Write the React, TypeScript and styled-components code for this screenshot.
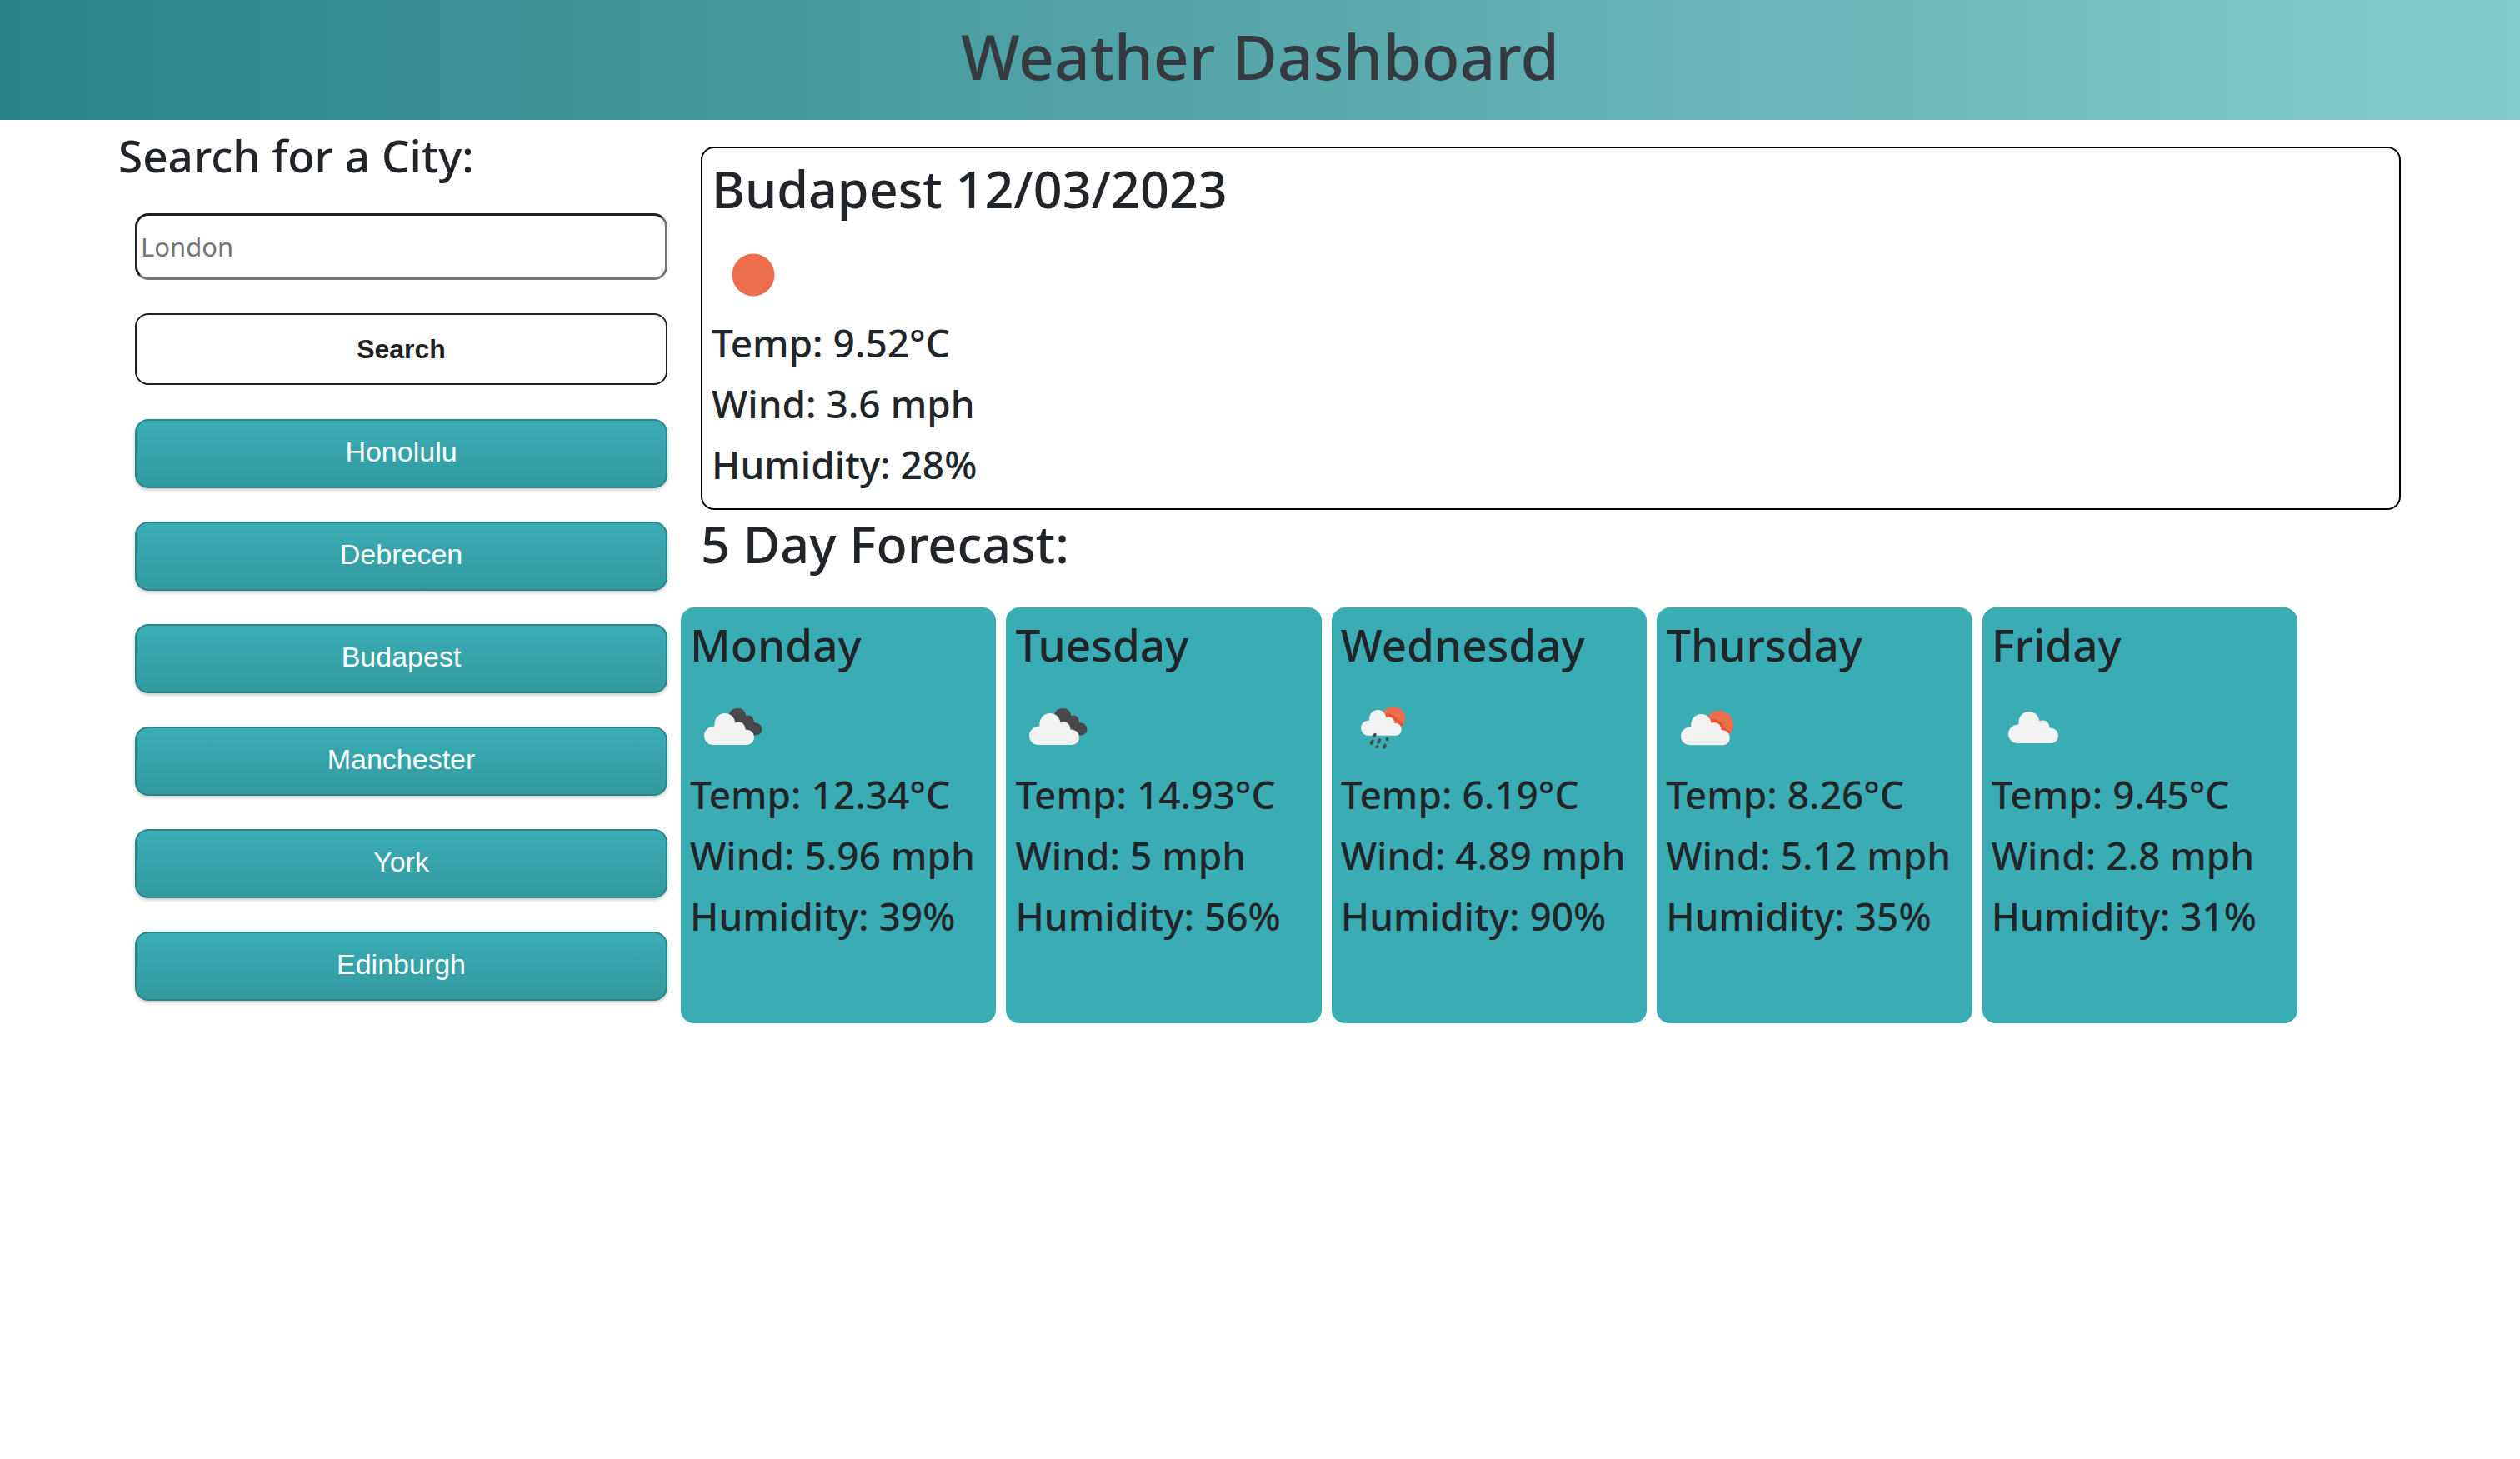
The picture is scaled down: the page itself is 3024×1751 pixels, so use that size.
import React, { useState } from "react";
import styled, { createGlobalStyle } from "styled-components";

type Sky = "clear" | "broken" | "rain" | "few" | "cloud";

interface Reading {
  temp: string;
  wind: string;
  humidity: string;
  sky: Sky;
}

const cities = ["Honolulu", "Debrecen", "Budapest", "Manchester", "York", "Edinburgh"];

const today: Reading = { temp: "9.52", wind: "3.6", humidity: "28", sky: "clear" };

const forecast: (Reading & { day: string })[] = [
  { day: "Monday", temp: "12.34", wind: "5.96", humidity: "39", sky: "broken" },
  { day: "Tuesday", temp: "14.93", wind: "5", humidity: "56", sky: "broken" },
  { day: "Wednesday", temp: "6.19", wind: "4.89", humidity: "90", sky: "rain" },
  { day: "Thursday", temp: "8.26", wind: "5.12", humidity: "35", sky: "few" },
  { day: "Friday", temp: "9.45", wind: "2.8", humidity: "31", sky: "cloud" },
];

const GlobalStyle = createGlobalStyle`
  *, *::before, *::after { box-sizing: border-box; }
  body {
    margin: 0;
    background: #fff;
    color: #212529;
    font-family: "Noto Sans", sans-serif;
  }
  h1, h2, h3, p { margin: 0; font-weight: 500; }
`;

const Header = styled.header`
  padding: 19px 0 29px;
  text-align: center;
  background: linear-gradient(90deg, #2a8387, #83cccf);
`;

const Title = styled.h1`
  font-size: 75px;
  line-height: 96px;
  color: #343a40;
`;

const Page = styled.div`
  display: grid;
  grid-template-columns: minmax(0, 659fr) minmax(0, 2040fr);
  column-gap: 40px;
  padding: 0 143px 0 142px;
`;

const Sidebar = styled.aside`
  padding-top: 9px;
`;

const SearchForm = styled.form`
  display: flex;
  flex-direction: column;
`;

const SearchLabel = styled.label`
  font-size: 53px;
  line-height: 68px;
  font-weight: 500;
`;

const SearchInput = styled.input`
  height: 80px;
  margin: 35px 0 40px 20px;
  padding: 0 4px;
  border: 3px solid;
  border-color: #212121 #767676 #767676 #212121;
  border-radius: 16px;
  background: #fff;
  color: #212529;
  font-family: inherit;
  font-size: 31px;

  &::placeholder { color: #757575; opacity: 1; }
`;

const SearchButton = styled.button`
  height: 86px;
  margin-left: 20px;
  border: 2px solid #212121;
  border-radius: 16px;
  background: #fff;
  color: #212121;
  font: bold 32px Arial, "Liberation Sans", sans-serif;
  cursor: pointer;
`;

const CityList = styled.div`
  display: flex;
  flex-direction: column;
  gap: 40px;
  margin: 41px 0 0 20px;
`;

const CityButton = styled.button`
  height: 83px;
  padding: 0 0 5px;
  border: 2px solid #2b8488;
  border-radius: 16px;
  background: linear-gradient(#3aadb4, #329a9e);
  background-origin: border-box;
  box-shadow: 0 2px 4px rgba(0, 0, 0, 0.22);
  color: #fff;
  font: 34px Arial, "Liberation Sans", sans-serif;
  cursor: pointer;
`;

const Current = styled.section`
  margin-top: 32px;
  padding: 10px 11px 24px;
  border: 2px solid #000;
  border-radius: 16px;
`;

const CurrentTitle = styled.h2`
  font-size: 61px;
  line-height: 78px;
`;

const ForecastTitle = styled.h2`
  margin: 2px 0 37px;
  font-size: 61px;
  line-height: 78px;
`;

const ForecastRow = styled.div`
  display: flex;
  gap: 12px;
  margin: 0 124px 0 -24px;
`;

const DayCard = styled.article`
  flex: 1 1 0;
  min-width: 0;
  padding: 11px 11px 100px;
  border-radius: 16px;
  background: #3aadb4;
`;

const DayName = styled.h3`
  font-size: 53px;
  line-height: 68px;
`;

const SkyIcon = styled.svg`
  display: block;
  width: 100px;
  height: 100px;
  margin: 14px 0 2px;
`;

const Readings = styled.div`
  display: flex;
  flex-direction: column;
  gap: 15px;
  font-size: 46px;
  line-height: 58px;
  white-space: nowrap;
`;

/* White cloud, 60 by 38 units, origin at its top left corner. */
const Cloud = ({ x, y, scale = 1 }: { x: number; y: number; scale?: number }) => (
  <path
    transform={`translate(${x} ${y}) scale(${scale})`}
    fill="#f2f2f2"
    d="M11 38A11 11 0 0 1 0 27C0 21 5 15.500 12.500 15.500C11.500 7 17 0 25 0C32 0 36.500 5 37.500 11.500C43 8.500 49.500 12 49.500 19.500C56 19.500 60 23.500 60 29C60 34.500 56 38 51 38Z"
  />
);

const Weather = ({ sky }: { sky: Sky }) => (
  <SkyIcon viewBox="0 0 100 100" role="img" aria-label={sky}>
    {sky === "clear" && <circle cx="50" cy="50" r="25.500" fill="#ec6e4c" />}
    {sky === "broken" && (
      <>
        <path
          fill="#48484a"
          d="M47 37C47 31 52 28 57.500 28C63 28 66 31 67.500 37C72 35 77 38.500 77 45C82.500 45 86.500 49 86.500 53.500C86.500 58 82.500 60.500 78 60.500H68Z"
        />
        <Cloud x={17} y={34} />
      </>
    )}
    {sky === "rain" && (
      <>
        <circle cx="63" cy="40" r="14" fill="#ec6e4c" />
        <path d="M51 38Q56 34 60 37Q66 38 67 43Q72 44 73 49" fill="none" stroke="#e8502f" strokeWidth="3" />
        <Cloud x={24} y={30} scale={0.81} />
        <g stroke="#48484a" strokeWidth="3.500" strokeLinecap="round">
          <path d="M41 59.500L40 61M38 67L36.500 70M46.500 66L45 69M55.500 64.500V65.500M43.500 74L43 74.500M53 72.500L51.500 75" />
        </g>
      </>
    )}
    {sky === "few" && (
      <>
        <circle cx="64" cy="48" r="17" fill="#ec6e4c" />
        <path d="M52 44Q58 40 63 45Q68 47 68 53Q73 54 76 58" fill="none" stroke="#e8502f" strokeWidth="3" />
        <Cloud x={18} y={35} scale={0.98} />
      </>
    )}
    {sky === "cloud" && <Cloud x={20} y={32} />}
  </SkyIcon>
);

const Details = ({ temp, wind, humidity, sky }: Reading) => (
  <>
    <Weather sky={sky} />
    <Readings>
      <p>Temp: {temp}°C</p>
      <p>Wind: {wind} mph</p>
      <p>Humidity: {humidity}%</p>
    </Readings>
  </>
);

export default function App() {
  const [query, setQuery] = useState("");

  return (
    <>
      <GlobalStyle />
      <Header>
        <Title>Weather Dashboard</Title>
      </Header>
      <Page>
        <Sidebar>
          <SearchForm onSubmit={(event) => event.preventDefault()}>
            <SearchLabel htmlFor="city">Search for a City:</SearchLabel>
            <SearchInput
              id="city"
              type="text"
              placeholder="London"
              value={query}
              onChange={(event) => setQuery(event.target.value)}
            />
            <SearchButton type="submit">Search</SearchButton>
          </SearchForm>
          <CityList>
            {cities.map((city) => (
              <CityButton key={city} type="button" onClick={() => setQuery(city)}>
                {city}
              </CityButton>
            ))}
          </CityList>
        </Sidebar>
        <main>
          <Current>
            <CurrentTitle>Budapest 12/03/2023</CurrentTitle>
            <Details {...today} />
          </Current>
          <ForecastTitle>5 Day Forecast:</ForecastTitle>
          <ForecastRow>
            {forecast.map(({ day, ...reading }) => (
              <DayCard key={day}>
                <DayName>{day}</DayName>
                <Details {...reading} />
              </DayCard>
            ))}
          </ForecastRow>
        </main>
      </Page>
    </>
  );
}
